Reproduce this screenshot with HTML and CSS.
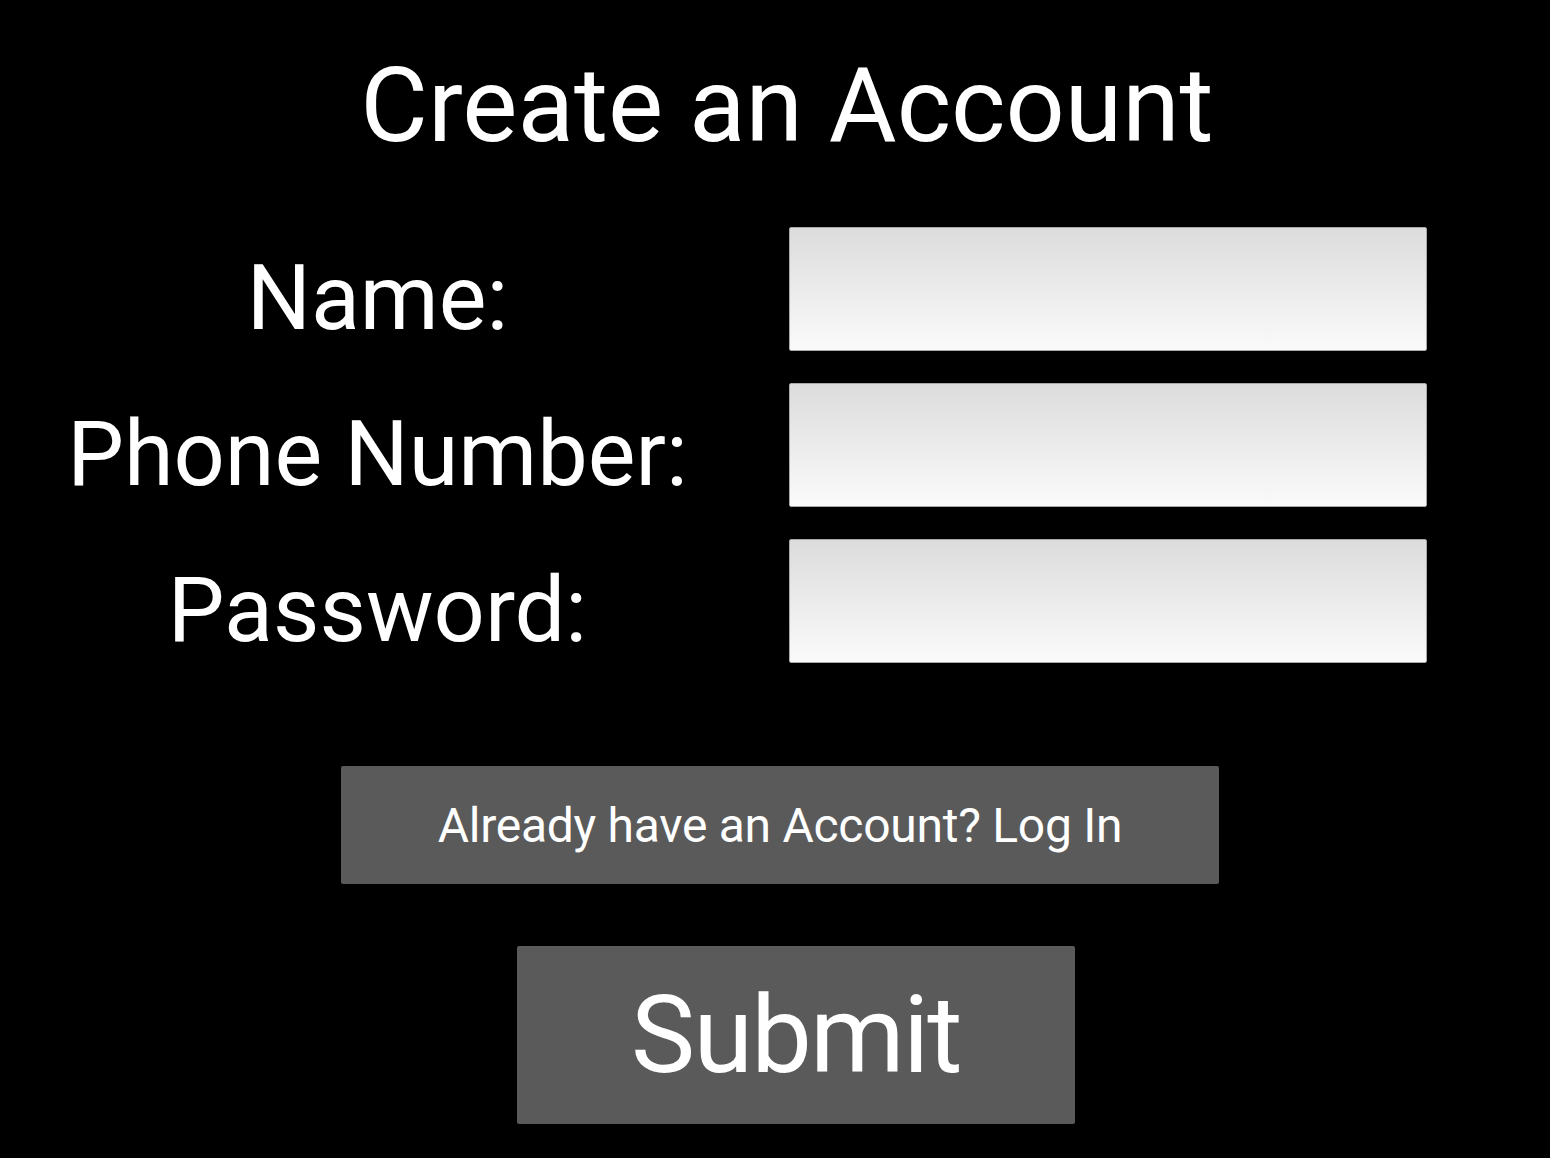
FILE: index.html
```html
<!DOCTYPE html>
<html lang="en">
<head>
<meta charset="utf-8">
<title>Create an Account</title>
<link rel="stylesheet" href="styles.css">
</head>
<body>
<main class="page">
  <h1 class="title">Create an Account</h1>
  <form class="form">
    <label class="label" for="name">Name:</label>
    <input class="field" id="name" type="text">
    <label class="label" for="phone">Phone Number:</label>
    <input class="field" id="phone" type="tel">
    <label class="label" for="password">Password:</label>
    <input class="field" id="password" type="password">
  </form>
  <div class="actions">
    <button class="btn btn-login" type="button">Already have an Account? Log In</button>
    <button class="btn btn-submit" type="button">Submit</button>
  </div>
</main>
</body>
</html>
```

FILE: styles.css
```css
html, body {
  margin: 0;
  padding: 0;
  background: #000;
}
body {
  width: 1550px;
  height: 1158px;
  overflow: hidden;
  font-family: Roboto, "Liberation Sans", sans-serif;
  color: #fff;
}
.page {
  display: flex;
  flex-direction: column;
}
.title {
  margin: 45px 0 0 0;
  padding-left: 24px;
  font-size: 104px;
  line-height: 122px;
  font-weight: 400;
  text-align: center;
}
.form {
  display: grid;
  grid-template-columns: 755px 638px;
  column-gap: 34px;
  row-gap: 32px;
  margin-top: 60px;
}
.label {
  align-self: end;
  text-align: center;
  font-size: 90px;
  line-height: normal;
}
.field {
  box-sizing: border-box;
  height: 124px;
  margin: 0;
  border: 1px solid #a8a8a8;
  border-radius: 2px;
  background: linear-gradient(to bottom, #dcdcdc, #fafafa);
  font-family: inherit;
  font-size: 40px;
  padding: 0 16px;
}
.actions {
  display: flex;
  flex-direction: column;
  align-items: flex-start;
}
.btn {
  box-sizing: border-box;
  border: none;
  border-radius: 2px;
  background: #5a5a5a;
  color: #fff;
  font-family: inherit;
  font-weight: 400;
  padding: 0;
  line-height: normal;
}
.btn-login {
  margin: 103px 0 0 341px;
  width: 878px;
  height: 118px;
  font-size: 48px;
  letter-spacing: -0.27px;
}
.btn-submit {
  margin: 62px 0 0 517px;
  width: 558px;
  height: 178px;
  font-size: 108px;
  letter-spacing: -1.8px;
}
```
